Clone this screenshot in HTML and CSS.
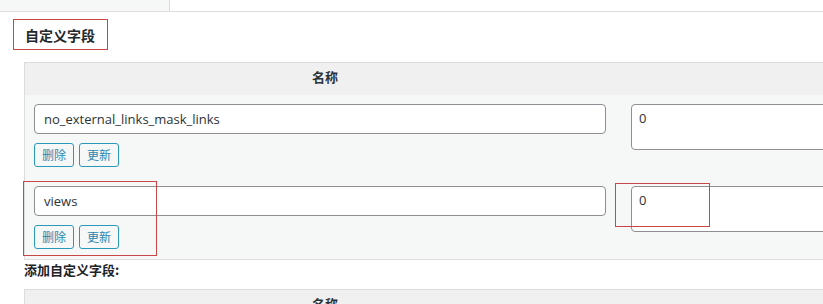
FILE: index.html
```html
<!DOCTYPE html>
<html lang="zh">
<head>
<meta charset="utf-8">
<link rel="stylesheet" href="styles.css">
</head>
<body>
<div class="topbar"><div class="tab"></div></div>
<div class="page">
  <div class="title-wrap"><h2 class="title">自定义字段</h2></div>
  <div class="table first">
    <div class="thead">
      <div class="th name-col">名称</div>
      <div class="th value-col"></div>
    </div>
    <div class="row">
      <div class="name-col cell">
        <input class="key" type="text" value="no_external_links_mask_links">
        <div class="btns"><button class="btn">删除</button><button class="btn">更新</button></div>
      </div>
      <div class="value-col cell"><textarea class="val">0</textarea></div>
    </div>
    <div class="row">
      <div class="name-col cell">
        <input class="key" type="text" value="views">
        <div class="btns"><button class="btn">删除</button><button class="btn">更新</button></div>
      </div>
      <div class="value-col cell"><textarea class="val">0</textarea></div>
      <div class="mark mark-a"></div>
      <div class="mark mark-b"></div>
    </div>
  </div>
  <p class="add-label">添加自定义字段:</p>
  <div class="table second">
    <div class="thead">
      <div class="th name-col">名称</div>
      <div class="th value-col"></div>
    </div>
  </div>
</div>
</body>
</html>
```
FILE: styles.css
```css
html, body {
  margin: 0;
  padding: 0;
  background: #fff;
  overflow: hidden;
  width: 823px;
  height: 304px;
  font-family: "Noto Sans", "Noto Sans CJK SC", sans-serif;
  color: #1d2327;
}
.topbar {
  height: 11px;
  border-bottom: 1px solid #dcdcde;
}
.tab {
  width: 169px;
  height: 11px;
  background: #f6f7f7;
  border-right: 1px solid #dcdcde;
}
.page {
  padding-left: 24px;
  width: 1100px;
}
.title-wrap {
  margin-left: -11px;
  padding-top: 7px;
}
.title {
  display: inline-block;
  margin: 0;
  font-family: "Noto Sans CJK SC", sans-serif;
  font-size: 14px;
  font-weight: 700;
  line-height: 20px;
  padding: 5px 12px 4px 11px;
  border: 1px solid #c94646;
  color: #23282d;
}
.table {
  border: 1px solid #dcdcde;
  border-right: none;
  width: 1000px;
}
.table.first { margin-top: 12px; }
.table.second { margin-top: 9px; }
.thead {
  display: flex;
  background: #f0f0f1;
  height: 32px;
}
.th {
  font-family: "Noto Sans CJK SC", sans-serif;
  font-size: 13px;
  font-weight: 700;
  line-height: 28px;
  text-align: center;
  color: #2c3338;
}
.name-col { width: 600px; flex: none; }
.value-col { flex: 1; }
.row {
  display: flex;
  background: #f6f7f7;
  position: relative;
}
.cell {
  box-sizing: border-box;
  padding: 9px 0 10px 0;
}
.row .name-col { padding-left: 9px; padding-right: 19px; }
.row .value-col { padding-left: 6px; }
.key {
  display: block;
  box-sizing: border-box;
  width: 572px;
  height: 30px;
  margin: 0;
  padding: 0 9px;
  border: 1px solid #8c8f94;
  border-radius: 4px;
  background: #fff;
  font-family: "Open Sans", "Noto Sans", sans-serif;
  font-size: 13px;
  color: #2c3338;
}
.btns {
  display: flex;
  gap: 5px;
  margin-top: 9px;
}
.btn {
  box-sizing: border-box;
  width: 40px;
  height: 24px;
  margin: 0;
  padding: 0;
  border: 1px solid #2a98b8;
  border-radius: 3px;
  background: #f6f7f7;
  color: #2b87b0;
  font-family: "Noto Sans CJK SC", sans-serif;
  font-size: 12px;
  line-height: 22px;
}
.val {
  display: block;
  box-sizing: border-box;
  width: 400px;
  height: 46px;
  margin: 0;
  padding: 4px 7px;
  border: 1px solid #8c8f94;
  border-radius: 4px;
  background: #fff;
  resize: none;
  font-family: "Open Sans", "Noto Sans", sans-serif;
  font-size: 13px;
  line-height: 18px;
  color: #2c3338;
}
.mark {
  position: absolute;
  border: 1px solid #c94646;
  box-sizing: border-box;
}
.mark-a { left: -2px; top: 4px; width: 134px; height: 75px; }
.mark-b { left: 590px; top: 6px; width: 95px; height: 44px; }
.add-label {
  margin: 0;
  padding-top: 0;
  font-family: "Noto Sans CJK SC", sans-serif;
  font-size: 13px;
  font-weight: 700;
  line-height: 20px;
  color: #1d2327;
}
```
